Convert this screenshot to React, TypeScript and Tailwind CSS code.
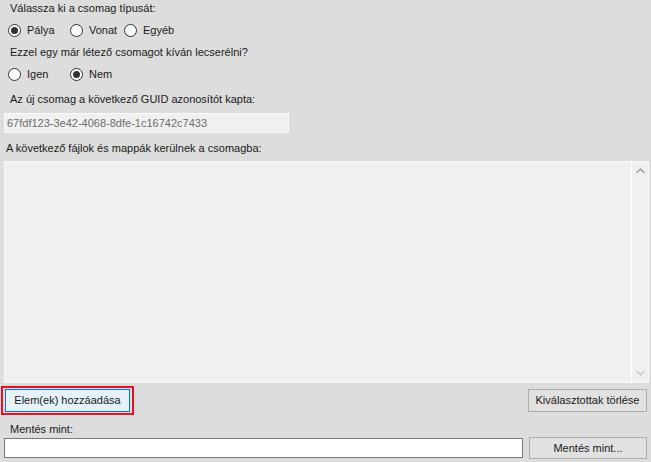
import React from "react";

function Radio({ label, checked, className }: { label: string; checked?: boolean; className?: string }) {
  return (
    <div className={`flex items-center ${className ?? ""}`}>
      <span className="flex h-[13px] w-[13px] items-center justify-center rounded-full border border-[#333333] bg-white">
        {checked && <span className="h-[7px] w-[7px] rounded-full bg-[#333333]" />}
      </span>
      <span className="ml-[6px]">{label}</span>
    </div>
  );
}

export default function App() {
  return (
    <div className="flex h-[462px] w-[651px] flex-col bg-[#dddddd] px-[4px] font-['Liberation_Sans',Arial,sans-serif] text-[11px] text-[#1a1a1a]">
      <div className="ml-[6px] h-[16px] leading-[16px]">Válassza ki a csomag típusát:</div>
      <div className="mt-[6px] flex h-[16px] items-center leading-[16px]">
        <Radio label="Pálya" checked className="ml-[4px] w-[62px]" />
        <Radio label="Vonat" className="w-[54px]" />
        <Radio label="Egyéb" />
      </div>
      <div className="ml-[6px] mt-[6px] h-[16px] leading-[16px]">Ezzel egy már létező csomagot kíván lecserélni?</div>
      <div className="mt-[6px] flex h-[16px] items-center leading-[16px]">
        <Radio label="Igen" className="ml-[4px] w-[62px]" />
        <Radio label="Nem" checked />
      </div>
      <div className="ml-[6px] mt-[9px] h-[16px] leading-[16px]">Az új csomag a következő GUID azonosítót kapta:</div>
      <div className="mt-[6px] flex h-[20px] w-[285px] items-center border border-[#f9f9f9] bg-[#f0f0f0] px-[2px] text-[#6d6d6d]">
        67fdf123-3e42-4068-8dfe-1c16742c7433
      </div>
      <div className="ml-[2px] mt-[7px] h-[16px] leading-[16px]">A következő fájlok és mappák kerülnek a csomagba:</div>
      <div className="mt-[5px] flex h-[222px] w-[645px] border border-[#f9f9f9] bg-[#f0f0f0]">
        <div className="flex-1" />
        <div className="flex w-[17px] flex-col items-center justify-between border-l border-white py-[6px]">
          <svg width="9" height="6" viewBox="0 0 9 6">
            <path d="M0.5 5 L4.5 1 L8.5 5" fill="none" stroke="#a6a6a6" strokeWidth="1.6" />
          </svg>
          <svg width="9" height="6" viewBox="0 0 9 6">
            <path d="M0.5 1 L4.5 5 L8.5 1" fill="none" stroke="#c8c8c8" strokeWidth="1.4" />
          </svg>
        </div>
      </div>
      <div className="-ml-[3px] mt-[3px] flex h-[29px] items-center justify-between">
        <div className="flex h-[29px] w-[133px] items-center justify-center border-2 border-[#e81123]">
          <div className="flex h-[23px] w-[125px] items-center justify-center border border-[#0078d7] bg-[#e5f1fb]">
            Elem(ek) hozzáadása
          </div>
        </div>
        <div className="flex h-[23px] w-[119px] items-center justify-center border border-[#adadad] bg-[#e1e1e1]">
          Kiválasztottak törlése
        </div>
      </div>
      <div className="ml-[6px] mt-[6px] h-[16px] leading-[16px]">Mentés mint:</div>
      <div className="mt-[1px] flex items-start justify-between">
        <div className="h-[20px] w-[519px] border border-[#7a7a7a] bg-white" />
        <div className="-mt-[1px] flex h-[22px] w-[118px] items-center justify-center border border-[#adadad] bg-[#e1e1e1]">
          Mentés mint...
        </div>
      </div>
    </div>
  );
}
